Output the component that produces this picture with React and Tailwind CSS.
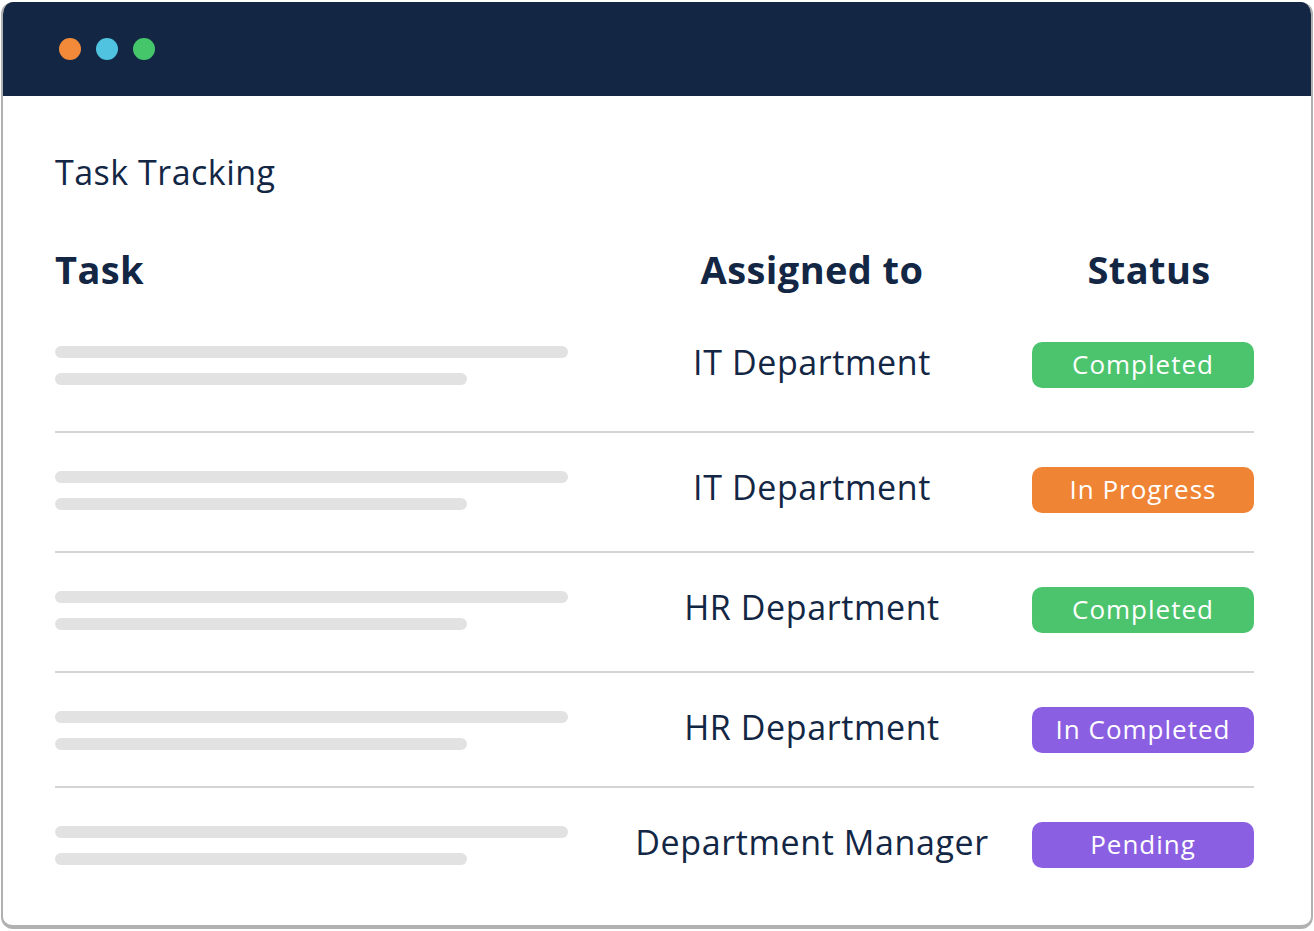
import React from "react";

const rows = [
  { who: "IT Department", status: "Completed", color: "bg-[#4cc46e]", h: "h-[127px]", pt: "pt-[36px]" },
  { who: "IT Department", status: "In Progress", color: "bg-[#f08435]", h: "h-[120px]", pt: "pt-[34px]" },
  { who: "HR Department", status: "Completed", color: "bg-[#4cc46e]", h: "h-[120px]", pt: "pt-[34px]" },
  { who: "HR Department", status: "In Completed", color: "bg-[#8b5fe2]", h: "h-[115px]", pt: "pt-[34px]" },
  { who: "Department Manager", status: "Pending", color: "bg-[#8b5fe2]", h: "h-[100px]", pt: "pt-[34px]", last: true },
];

export default function App() {
  return (
    <div className="w-[1314px] h-[931px] bg-white pt-[2px] px-[1px] pb-[2px] font-['Open_Sans',sans-serif] text-[#132745]">
      <div className="h-full rounded-[12px] overflow-hidden border-x-2 border-b-4 border-[#b1b1b1] flex flex-col bg-white">
        <div className="h-[94px] shrink-0 bg-[#132745] flex items-center pl-[56px] gap-[15px]">
          <span className="w-[22px] h-[22px] rounded-full bg-[#f28a3a]" />
          <span className="w-[22px] h-[22px] rounded-full bg-[#4fc3e0]" />
          <span className="w-[22px] h-[22px] rounded-full bg-[#46c66b]" />
        </div>
        <div className="pl-[52px] pr-[57px]">
          <div className="mt-[55px] text-[34px] leading-[42px] tracking-[0.5px]">Task Tracking</div>
          <div className="mt-[52px] flex items-center h-[48px] text-[38px] font-bold leading-[48px] tracking-[0.4px]">
            <div className="w-[513px]">Task</div>
            <div className="flex-1 pl-[24px] text-center">Assigned to</div>
            <div className="w-[222px] text-center pl-[12px]">Status</div>
          </div>
          <div className="mt-[13px]">
            {rows.map((r, i) => (
              <div key={i} className={`${r.h} ${r.pt} ${r.last ? "" : "border-b-2 border-[#d5d5d5]"}`}>
                <div className="flex items-start h-[46px]">
                  <div className="w-[513px] pt-[4px] flex flex-col gap-[15px]">
                    <div className="h-[12px] w-[513px] rounded-full bg-[#e2e2e2]" />
                    <div className="h-[12px] w-[412px] rounded-full bg-[#e2e2e2]" />
                  </div>
                  <div className="flex-1 pl-[24px] text-center text-[34px] leading-[40px] tracking-[0.6px]">{r.who}</div>
                  <div className={`w-[222px] h-[46px] rounded-[10px] ${r.color} text-white text-[26px] tracking-[1px] leading-[32px] pb-[2px] flex items-center justify-center`}>
                    {r.status}
                  </div>
                </div>
              </div>
            ))}
          </div>
        </div>
      </div>
    </div>
  );
}
